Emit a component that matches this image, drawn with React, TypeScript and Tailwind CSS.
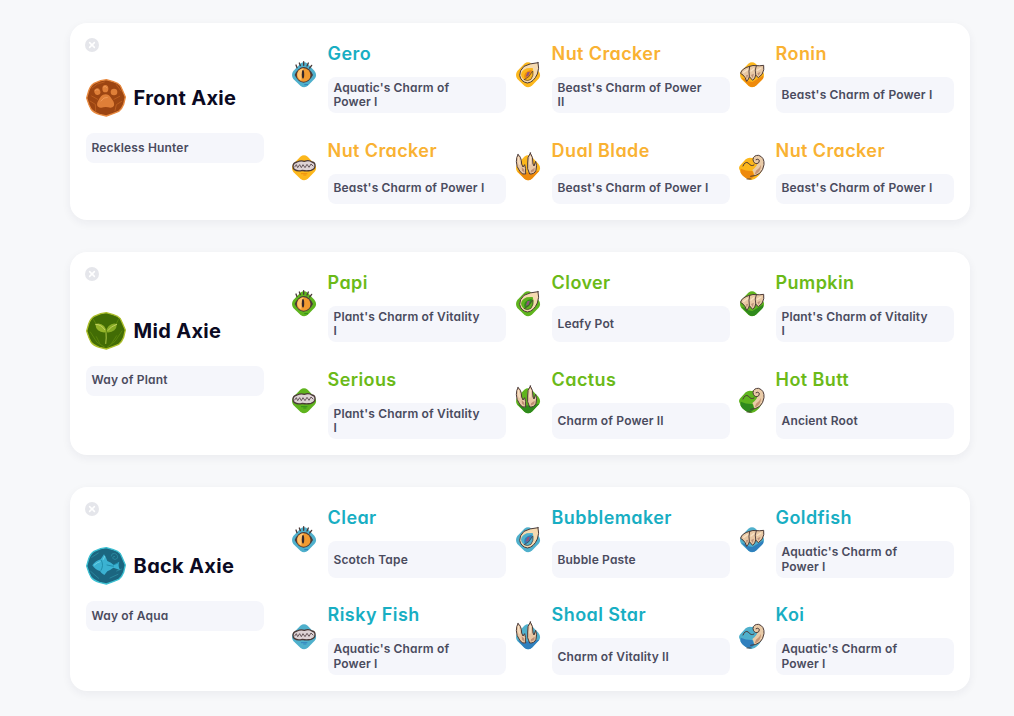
import React from 'react'

type AxieClass = 'aquatic' | 'beast' | 'plant'
type PartType = 'eyes' | 'ears' | 'back' | 'mouth' | 'horn' | 'tail'

type Part = {
  type: PartType
  name: string
  cls: AxieClass
  charm: string
}

type Axie = {
  title: string
  cls: AxieClass
  rune: string
  parts: Part[]
}

const titleColor = {
  aquatic: 'text-[#18aec3]',
  beast: 'text-[#f9b233]',
  plant: 'text-[#6bba18]',
}

const gem = {
  aquatic: { base: '#4fb0cc', dark: '#2f7fbd' },
  beast: { base: '#fcb71c', dark: '#ee8a0c' },
  plant: { base: '#5fb41e', dark: '#2f8a1c' },
}

const axies: Axie[] = [
  {
    title: 'Front Axie',
    cls: 'beast',
    rune: 'Reckless Hunter',
    parts: [
      { type: 'eyes', name: 'Gero', cls: 'aquatic', charm: "Aquatic's Charm of\nPower I" },
      { type: 'ears', name: 'Nut Cracker', cls: 'beast', charm: "Beast's Charm of Power\nII" },
      { type: 'back', name: 'Ronin', cls: 'beast', charm: "Beast's Charm of Power I" },
      { type: 'mouth', name: 'Nut Cracker', cls: 'beast', charm: "Beast's Charm of Power I" },
      { type: 'horn', name: 'Dual Blade', cls: 'beast', charm: "Beast's Charm of Power I" },
      { type: 'tail', name: 'Nut Cracker', cls: 'beast', charm: "Beast's Charm of Power I" },
    ],
  },
  {
    title: 'Mid Axie',
    cls: 'plant',
    rune: 'Way of Plant',
    parts: [
      { type: 'eyes', name: 'Papi', cls: 'plant', charm: "Plant's Charm of Vitality\nI" },
      { type: 'ears', name: 'Clover', cls: 'plant', charm: 'Leafy Pot' },
      { type: 'back', name: 'Pumpkin', cls: 'plant', charm: "Plant's Charm of Vitality\nI" },
      { type: 'mouth', name: 'Serious', cls: 'plant', charm: "Plant's Charm of Vitality\nI" },
      { type: 'horn', name: 'Cactus', cls: 'plant', charm: 'Charm of Power II' },
      { type: 'tail', name: 'Hot Butt', cls: 'plant', charm: 'Ancient Root' },
    ],
  },
  {
    title: 'Back Axie',
    cls: 'aquatic',
    rune: 'Way of Aqua',
    parts: [
      { type: 'eyes', name: 'Clear', cls: 'aquatic', charm: 'Scotch Tape' },
      { type: 'ears', name: 'Bubblemaker', cls: 'aquatic', charm: 'Bubble Paste' },
      { type: 'back', name: 'Goldfish', cls: 'aquatic', charm: "Aquatic's Charm of\nPower I" },
      { type: 'mouth', name: 'Risky Fish', cls: 'aquatic', charm: "Aquatic's Charm of\nPower I" },
      { type: 'horn', name: 'Shoal Star', cls: 'aquatic', charm: 'Charm of Vitality II' },
      { type: 'tail', name: 'Koi', cls: 'aquatic', charm: "Aquatic's Charm of\nPower I" },
    ],
  },
]

const PartIcon: React.FC<{ type: PartType; cls: AxieClass }> = ({ type, cls }) => {
  const { base, dark } = gem[cls]
  const ink = '#4b3a38'
  return (
    <svg className="w-[30px] h-[30px] overflow-visible" viewBox="0 0 90 90" fill="none" strokeLinecap="round" strokeLinejoin="round">
      {type !== 'tail' && (
        <path d="M34 14 Q45 6 56 14 L76 35 Q86 48 77 59 L58 79 Q46 90 34 80 L13 60 Q5 48 13 36Z" fill={base} />
      )}
      {type === 'eyes' && (
        <>
          <path d="M24 26 L21 18 M34 20 L31 12 M44 19 V8 M54 21 L58 12 M62 27 L68 19" stroke={ink} strokeWidth="4" />
          <path d="M17 48 Q27 25 44 24 Q62 25 72 48 Q61 70 44 71 Q27 70 17 48Z" fill={ink} />
          <circle cx="44" cy="48" r="20.5" fill="#f29a30" />
          <path d="M25 44 Q29 30 44 28 Q37 42 37 64 Q25 58 25 44Z" fill="#ffc472" />
          <ellipse cx="42" cy="46" rx="3.6" ry="13" fill="#33262a" />
          <path d="M47 77 H56" stroke={dark} strokeWidth="3" />
        </>
      )}
      {type === 'mouth' && (
        <>
          <path d="M12 43 Q12 33 24 30 Q36 24 46 28 Q60 23 69 30 Q79 32 78 42 Q78 51 66 55 Q52 58 40 55 Q26 59 17 53 Q12 50 12 43Z" fill="#ddd2d4" stroke={ink} strokeWidth="4" />
          <path d="M17 45 L22 38 L26 47 L32 38 L37 47 L42 38 L48 47 L54 37 L60 46 L66 36 L72 42" stroke="#5d4d52" strokeWidth="2.8" />
          <path d="M37 65 H54 M44 69 H51" stroke={dark} strokeWidth="2.6" />
        </>
      )}
      {type === 'ears' && (
        <>
          <path d="M75 11 Q80 28 73 45 Q62 70 43 72 Q23 68 20 49 Q19 35 33 22 Q49 13 75 11Z" fill="#f5dab0" stroke={ink} strokeWidth="3" />
          <path d="M59 27 Q64 38 60 50 Q54 64 41 65 Q26 61 24 47 Q26 34 41 28 Q52 26 59 27Z" fill={base} />
          <path d="M56 32 Q59 45 51 54 L36 61 Q31 50 37 42 Q43 34 56 32Z" fill={dark} />
          <path d="M34 62 Q48 58 59 36 Q63 49 54 61 Q45 68 34 62Z" fill={base} stroke={ink} strokeWidth="2" />
          <path d="M43 40 L51 38 L46 51 L38 53Z" fill="#91567c" />
        </>
      )}
      {type === 'back' && (
        <>
          <path d="M14 57 Q24 58 34 67 L46 69 L78 50 Q82 58 74 64 L57 80 Q46 88 35 80Z" fill={dark} />
          <path d="M11 42 Q14 28 38 22 Q48 18 57 20 Q68 21 80 19 Q83 32 75 46 L64 56 L56 48 Q55 58 47 64 L37 53 Q36 60 29 67 Q25 54 19 49Z" fill="#e8c8a4" stroke={ink} strokeWidth="3" />
          <path d="M38 22 Q34 36 37 52 M58 20 Q52 33 56 47" stroke={ink} strokeWidth="2.8" />
          <path d="M20 40 L32 32 M42 36 L50 29 M61 34 L72 27" stroke="#f8e3c6" strokeWidth="4" />
          <path d="M27 49 L34 47 L29 61Z M42 48 L51 44 L47 58Z M61 43 L71 38 L65 50Z" fill="#bd907a" />
        </>
      )}
      {type === 'horn' && (
        <>
          <path d="M14 58 L37 62 L79 56 L57 80 Q46 90 34 80Z" fill={dark} />
          <path d="M15 8 Q25 12 26 36 L30 45 L35 38 Q39 48 38 66 Q28 70 20 57 Q10 44 10 29 Q10 14 15 8Z" fill="#e9c7a4" stroke={ink} strokeWidth="3" />
          <path d="M52 3 Q61 14 60 36 L63 42 L68 28 Q73 41 69 55 Q64 67 50 66 Q41 51 44 33 Q42 15 52 3Z" fill="#e9c7a4" stroke={ink} strokeWidth="3" />
          <path d="M26 46 L33 52 L35 62 L27 56Z M54 55 L65 47 L64 57 L53 62Z" fill="#be8e75" />
          <path d="M16 17 L19 36 M52 14 L51 36" stroke="#f8e3c9" strokeWidth="4" />
        </>
      )}
      {type === 'tail' && (
        <>
          <path d="M8 54 Q3 46 11 38 L26 22 Q33 16 44 18 L60 14 L78 42 Q76 62 60 76 Q46 90 30 80 Q12 70 8 54Z" fill={base} />
          <path d="M11 50 Q29 58 46 57 L52 72 Q44 82 37 82 Q17 75 11 62Z" fill={dark} />
          <path d="M52 71 Q78 66 81 38 Q83 16 65 10 Q50 9 48 22 Q49 36 61 34 Q60 44 46 54 Q51 60 52 71Z" fill="#e9cba8" />
          <path d="M41 73 Q76 72 81 38 Q83 16 65 10 Q50 9 48 22 Q49 35 60 35 Q68 33 67 25 Q63 19 57 23" stroke={ink} strokeWidth="3" />
          <path d="M18 42 Q24 27 34 33 Q42 45 51 39" stroke={ink} strokeWidth="3" />
          <path d="M57 56 Q68 49 72 38 Q73 59 52 69Z" fill="#c79474" />
          <path d="M30 81 H42" stroke={ink} strokeWidth="2.5" />
        </>
      )}
    </svg>
  )
}

const ClassBadge: React.FC<{ cls: AxieClass }> = ({ cls }) => {
  const shape = 'M44 5 L61 2 L82 8 Q96 12 103 20 L110 35 L118 54 L113 76 Q108 90 98 97 L81 104 L61 111 L40 106 Q22 100 15 90 L9 77 L2 57 L8 36 Q13 20 24 13Z'
  return (
    <svg className="w-10 h-[38px] shrink-0" viewBox="0 0 120 114" fill="none" strokeLinecap="round" strokeLinejoin="round">
      {cls === 'beast' && (
        <>
          <path d={shape} fill="#9c4512" stroke="#e88a40" strokeWidth="4" />
          <path d="M18 27 L34 15 L55 9 M12 66 L28 76 L29 96 M91 17 L105 36 M107 67 L91 77 L87 95 M17 51 L35 61 M101 52 L84 61" stroke="#bf6222" strokeWidth="2.5" />
          <path d="M59 46 C72 46 75 58 82 67 C88 80 82 86 73 86 Q59 82 46 86 C34 87 30 78 36 67 C42 56 47 46 59 46Z" fill="#df7f38" />
          <ellipse cx="34" cy="38" rx="9" ry="10" transform="rotate(-20 34 38)" fill="#df7f38" />
          <ellipse cx="58" cy="29" rx="9" ry="11" fill="#df7f38" />
          <ellipse cx="84" cy="39" rx="10" ry="10" fill="#df7f38" />
          <path d="M45 66 Q53 53 64 55 M28 34 Q33 29 37 33 M53 24 Q58 19 62 25" stroke="#f09a58" strokeWidth="3" />
        </>
      )}
      {cls === 'plant' && (
        <>
          <path d={shape} fill="#426c05" stroke="#aec02c" strokeWidth="4" />
          <path d="M13 60 L33 91 L57 106 M108 57 L87 88 L63 106 M22 22 L34 42 M98 21 L91 35 M31 74 L41 94 M92 71 L77 94" stroke="#5f890c" strokeWidth="2.5" />
          <path d="M60 62 Q62 76 59 94" stroke="#93b038" strokeWidth="4" />
          <path d="M28 36 Q43 31 54 42 Q61 49 60 61 Q45 63 36 55 Q29 48 28 36Z" fill="#95b52a" />
          <path d="M93 36 Q79 31 68 42 Q61 49 61 61 Q76 63 85 55 Q92 48 93 36Z" fill="#87ab24" />
          <path d="M29 37 Q46 37 56 53 M92 37 Q74 43 66 55" stroke="#ccd56a" strokeWidth="2.5" />
        </>
      )}
      {cls === 'aquatic' && (
        <>
          <path d={shape} fill="#1b6680" stroke="#3cc0d2" strokeWidth="4" />
          <path d="M17 31 L37 18 M14 73 L38 94 M76 27 Q76 18 86 19 Q97 23 94 34 Q87 41 80 34 Q79 28 86 28 M72 93 L96 82 M92 72 L107 66" stroke="#2c8ba1" strokeWidth="2.5" />
          <path d="M19 55 Q28 42 44 37 L54 22 Q60 30 64 42 Q76 46 83 54 L100 44 Q95 56 102 69 L82 62 Q73 69 64 73 L55 84 Q46 80 42 72 Q28 69 19 55Z" fill="#3bb2d2" />
          <path d="M46 40 Q54 55 45 70 M63 54 L82 58 M82 54 L96 48" stroke="#1c87a5" strokeWidth="2.5" />
          <path d="M25 54 Q33 46 42 44 M52 37 L56 28" stroke="#71d3e4" strokeWidth="3" />
        </>
      )}
    </svg>
  )
}

const CloseButton = () => (
  <button className="absolute top-[15px] left-[15px] flex w-3.5 h-3.5 items-center justify-center rounded-full bg-[#e5e6eb]">
    <svg className="w-2 h-2" viewBox="0 0 8 8" stroke="#fff" strokeWidth="1.5" strokeLinecap="round">
      <path d="M1.6 1.6 L6.4 6.4 M6.4 1.6 L1.6 6.4" />
    </svg>
  </button>
)

const CharmBox: React.FC<{ text: string }> = ({ text }) => (
  <div className="flex items-center w-[178px] min-h-[30px] flex-1 rounded-lg bg-[#f5f6fb] pl-[5.5px] py-1">
    <p className="whitespace-pre text-[12px] leading-[14.4px] font-[560] tracking-[0.16px] text-[#4a4b5e]">{text}</p>
  </div>
)

const PartCell: React.FC<{ part: Part }> = ({ part }) => (
  <div className="flex">
    <div className="flex w-[46px] items-center pl-[7px] pb-[4.4px]">
      <PartIcon type={part.type} cls={part.cls} />
    </div>
    <div className="flex flex-col">
      <h3 className={`-ml-[0.4px] mb-2.5 h-7 whitespace-nowrap text-[18px] leading-[30px] font-semibold tracking-[0.4px] ${titleColor[part.cls]}`}>{part.name}</h3>
      <CharmBox text={part.charm} />
    </div>
  </div>
)

const AxieCard: React.FC<{ axie: Axie }> = ({ axie }) => (
  <div className="relative flex w-[900px] justify-between rounded-[17px] bg-white p-4 shadow-[0_3px_10px_rgba(30,40,60,0.06)]">
    <CloseButton />
    <div className="flex flex-col justify-center">
      <div className="mb-4 flex items-center gap-[7.6px]">
        <ClassBadge cls={axie.cls} />
        <h2 className="whitespace-nowrap text-[20px] leading-[38px] font-bold tracking-[0.3px] text-[#0b0a22]">{axie.title}</h2>
      </div>
      <div className="flex">
        <CharmBox text={axie.rune} />
      </div>
    </div>
    <div className="grid grid-cols-3 gap-y-[22.2px]">
      {axie.parts.map((part) => (
        <PartCell key={part.type} part={part} />
      ))}
    </div>
  </div>
)

export default function App() {
  return (
    <div className="flex h-screen flex-col gap-8 overflow-hidden bg-[#f7f8fa] pl-[70px] pt-[22.6px] font-[Inter,sans-serif] [font-feature-settings:'cv11']">
      {axies.map((axie) => (
        <AxieCard key={axie.title} axie={axie} />
      ))}
    </div>
  )
}
